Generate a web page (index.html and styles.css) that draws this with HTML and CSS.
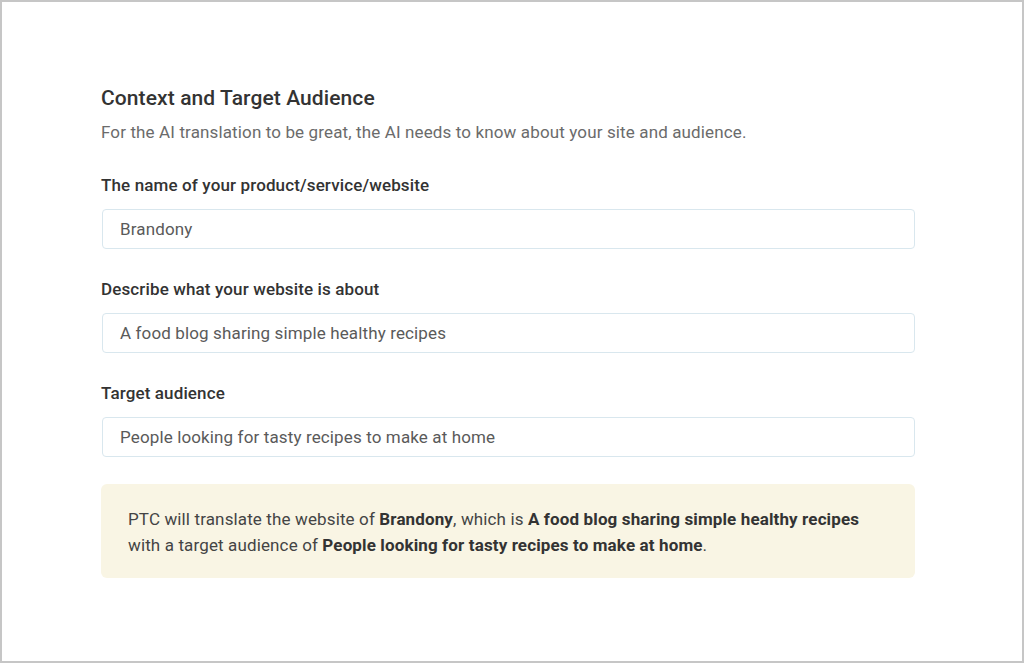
FILE: index.html
```html
<!DOCTYPE html>
<html>
<head>
<meta charset="utf-8">
<link rel="stylesheet" href="styles.css">
</head>
<body>
<div class="frame">
  <div class="content">
    <h2 class="title">Context and Target Audience</h2>
    <p class="subtitle">For the AI translation to be great, the AI needs to know about your site and audience.</p>
    <div class="field">
      <label class="label">The name of your product/service/website</label>
      <div class="input">Brandony</div>
    </div>
    <div class="field">
      <label class="label">Describe what your website is about</label>
      <div class="input">A food blog sharing simple healthy recipes</div>
    </div>
    <div class="field">
      <label class="label">Target audience</label>
      <div class="input">People looking for tasty recipes to make at home</div>
    </div>
    <div class="summary">
      PTC will translate the website of <b>Brandony</b>, which is <b>A food blog sharing simple healthy recipes</b><br>with a target audience of <b>People looking for tasty recipes to make at home</b>.
    </div>
  </div>
</div>
</body>
</html>
```
FILE: styles.css
```css
* { box-sizing: border-box; }
html, body { margin: 0; padding: 0; background: #fff; }
body { font-family: Roboto, "Noto Sans", sans-serif; letter-spacing: 0.13px; }
.frame {
  width: 1024px;
  height: 663px;
  border: 2px solid #c6c6c6;
  background: #fff;
  padding: 83px 0 0 99px;
}
.content { width: 814px; }
.title {
  margin: 0;
  font-size: 21px;
  line-height: 26px;
  font-weight: 500;
  color: #333;
  letter-spacing: 0.1px;
}
.subtitle {
  margin: 9px 0 0;
  font-size: 17px;
  line-height: 24px;
  color: #6b6b6b;
}
.field { margin-top: 29px; }
.field + .field { margin-top: 28px; }
.label {
  display: block;
  font-size: 17px;
  line-height: 24px;
  font-weight: 500;
  color: #333;
}
.input {
  margin: 12px 0 0 1px;
  height: 40px;
  border: 1px solid #d9e7ee;
  border-radius: 4px;
  padding: 0 17px;
  display: flex;
  align-items: center;
  font-size: 17px;
  color: #5a5a5a;
}
.summary {
  margin-top: 27px;
  background: #f9f5e4;
  border-radius: 6px;
  padding: 22px 27px;
  font-size: 17px;
  line-height: 26px;
  color: #444;
  height: 94px;
}
.summary b { font-weight: 700; color: #333; }
```
